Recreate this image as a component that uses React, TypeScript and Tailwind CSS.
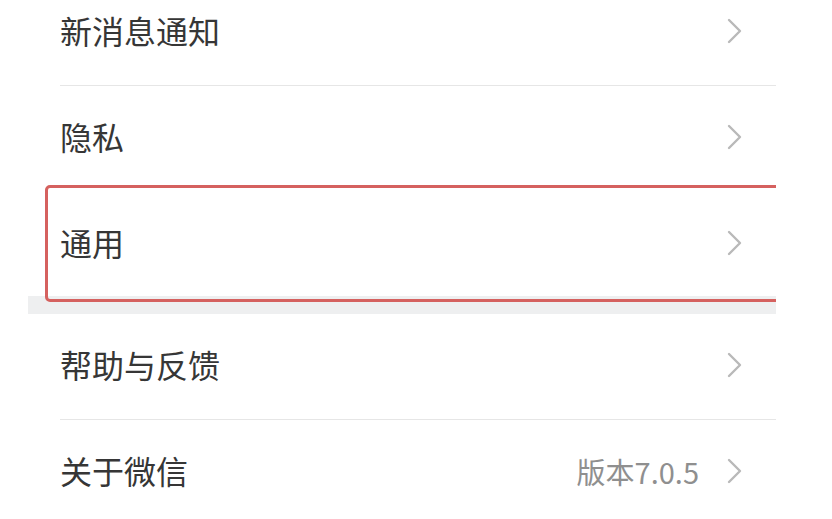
import React from "react";

const font = { fontFamily: '"Noto Sans CJK SC", "Noto Sans", sans-serif' };

function Chevron() {
  return (
    <svg width="15" height="26" viewBox="0 0 15 26" fill="none" className="shrink-0">
      <path d="M2 2 L13 13 L2 24" stroke="#b9b9b9" strokeWidth="2.4" strokeLinecap="round" strokeLinejoin="round" />
    </svg>
  );
}

function Row({ label, value, h = "h-[105px]" }: { label: string; value?: string; h?: string }) {
  return (
    <div className={`${h} flex items-center justify-between pl-[32px] pr-[34px] pb-[5px] bg-white`}>
      <span className="text-[32px] leading-none text-[#363636]">{label}</span>
      <div className="flex items-center gap-[28px] pt-[2px]">
        {value && <span className="text-[29px] leading-none text-[#8f8f8f]">{value}</span>}
        <Chevron />
      </div>
    </div>
  );
}

function Divider() {
  return <div className="ml-[32px] h-px bg-[#e6e6e6]" />;
}

export default function App() {
  return (
    <div className="w-[832px] h-[519px] overflow-hidden bg-white" style={font}>
      <div className="relative ml-[28px] w-[748px] -mt-[20px] overflow-hidden">
        <Row label="新消息通知" />
        <Divider />
        <Row label="隐私" />
        <div className="h-px bg-white" />
        <Row label="通用" h="h-[104px]" />
        <div className="h-[18px] bg-[#eeeff0]" />
        <Row label="帮助与反馈" />
        <Divider />
        <Row label="关于微信" value="版本7.0.5" />

        {/* 红框标注 */}
        <div className="absolute left-[17px] -right-[10px] top-[205px] h-[117px] rounded-[5px] border-[3px] border-[#d5615f] pointer-events-none" />
      </div>
    </div>
  );
}
